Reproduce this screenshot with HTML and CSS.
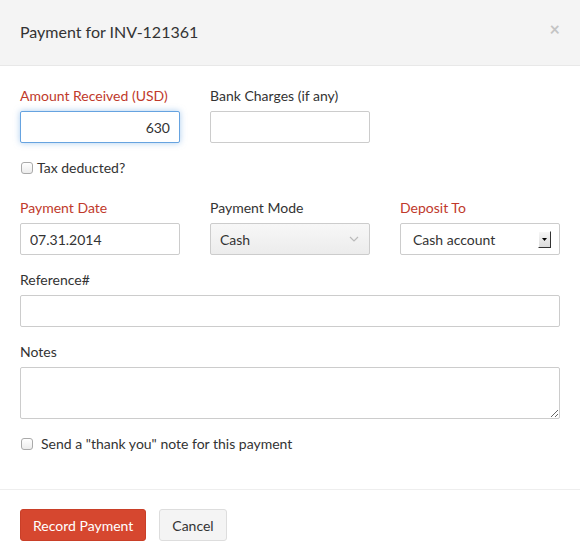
FILE: index.html
```html
<!DOCTYPE html>
<html lang="en">
<head>
    <meta charset="UTF-8">
    <title>Record Payment</title>
    <link rel="stylesheet" href="styles.css">
</head>
<body>
    <div class="modal">
        <header class="modal-header">
            <h4>Payment for INV-121361</h4>
            <span class="close">&times;</span>
        </header>

        <form class="modal-body">
            <div class="row">
                <div class="field">
                    <label class="required">Amount Received (USD)</label>
                    <input type="text" class="amount focused" value="630">
                </div>
                <div class="field">
                    <label>Bank Charges (if any)</label>
                    <input type="text">
                </div>
            </div>

            <label class="check tax">
                <input type="checkbox"> Tax deducted?
            </label>

            <div class="row">
                <div class="field">
                    <label class="required">Payment Date</label>
                    <input type="text" value="07.31.2014">
                </div>
                <div class="field">
                    <label>Payment Mode</label>
                    <div class="select mode">
                        <span>Cash</span>
                        <svg class="chevron" width="10" height="6" viewBox="0 0 10 6"><path d="M1 1l4 4 4-4" fill="none" stroke="#bbb" stroke-width="1.2"/></svg>
                    </div>
                </div>
                <div class="field">
                    <label class="required">Deposit To</label>
                    <div class="select account">
                        <span>Cash account</span>
                        <span class="drop-btn"><svg width="5" height="3" viewBox="0 0 5 3"><path d="M0 0h5L2.5 3z" fill="#000"/></svg></span>
                    </div>
                </div>
            </div>

            <div class="field">
                <label>Reference#</label>
                <input type="text">
            </div>

            <div class="field">
                <label>Notes</label>
                <textarea></textarea>
            </div>

            <label class="check thanks">
                <input type="checkbox"> Send a "thank you" note for this payment
            </label>
        </form>

        <footer class="modal-footer">
            <button class="btn btn-primary">Record Payment</button>
            <button class="btn btn-default">Cancel</button>
        </footer>
    </div>
</body>
</html>
```

FILE: styles.css
```css
* {
    margin: 0;
    padding: 0;
    box-sizing: border-box;
}

body {
    font-family: Lato, "Liberation Sans", Arial, sans-serif;
    font-size: 14px;
    color: #333;
    background: #fff;
}

.modal {
    width: 580px;
}

.modal-header {
    height: 66px;
    background: #f4f4f4;
    border-bottom: 1px solid #e8e8e8;
    display: flex;
    justify-content: space-between;
    align-items: center;
    padding: 0 20px;
}

.modal-header h4 {
    font-size: 16px;
    font-weight: normal;
    color: #333;
    margin-top: -2px;
}

.modal-header .close {
    font-size: 18px;
    font-weight: bold;
    color: #c4c4c4;
    margin: -8px 0 0 0;
}

.modal-body {
    padding: 20px 20px 0;
}

.row {
    display: grid;
    grid-template-columns: repeat(3, 160px);
    column-gap: 30px;
    margin-bottom: 15px;
}

.field {
    margin-bottom: 15px;
}

.row .field {
    margin-bottom: 0;
}

.field label {
    display: block;
    line-height: 20px;
    margin-bottom: 5px;
}

.field label.required {
    color: #c0392b;
}

input[type="text"], textarea, .select {
    display: block;
    width: 100%;
    height: 32px;
    border: 1px solid #ccc;
    border-radius: 2px;
    font-family: inherit;
    font-size: 14px;
    color: #333;
    padding: 0 9px;
    outline: none;
    background: #fff;
}

input.amount {
    text-align: right;
}

input.focused {
    border-color: #66a3e0;
    box-shadow: 0 0 6px rgba(102, 163, 224, 0.55);
}

textarea {
    height: 52px;
    resize: vertical;
}

.select {
    display: flex;
    align-items: center;
    justify-content: space-between;
}

.select.mode {
    background: linear-gradient(#f7f7f7, #ececec);
}

.select.mode .chevron {
    margin-right: 1px;
}

.select.account {
    padding: 0 8px 0 12px;
}

.drop-btn {
    width: 13px;
    height: 17px;
    display: flex;
    align-items: center;
    justify-content: center;
    background: linear-gradient(#f6f6f6, #dcdcdc);
    border-right: 1px solid #333;
    border-bottom: 1px solid #333;
    border-top: 1px solid #fff;
    border-left: 1px solid #fff;
}

.check {
    display: flex;
    align-items: center;
    line-height: 16px;
}

.check input {
    appearance: none;
    -webkit-appearance: none;
    width: 12px;
    height: 12px;
    border: 1px solid #aaa;
    border-radius: 3px;
    background: linear-gradient(#fff, #ececec);
    margin: 0 6px 0 1px;
}

/* sibling margins collapse, so this top margin replaces the row's 15px */
.check.tax {
    margin: 17px 0 22px;
}

.check.tax input {
    margin-right: 4px;
}

.check.thanks {
    margin: 17px 0 37px;
}

.check.thanks input {
    margin-right: 8px;
}

.modal-footer {
    border-top: 1px solid #eee;
    padding: 19px 20px;
    display: flex;
    gap: 13px;
}

.btn {
    height: 32px;
    padding: 0 12px;
    font-family: inherit;
    font-size: 14px;
    border-radius: 3px;
    cursor: pointer;
}

.btn-primary {
    background: #d6472f;
    border: 1px solid #c93f28;
    color: #fff;
}

.btn-default {
    background: #f4f4f4;
    border: 1px solid #ddd;
    color: #333;
}
```
